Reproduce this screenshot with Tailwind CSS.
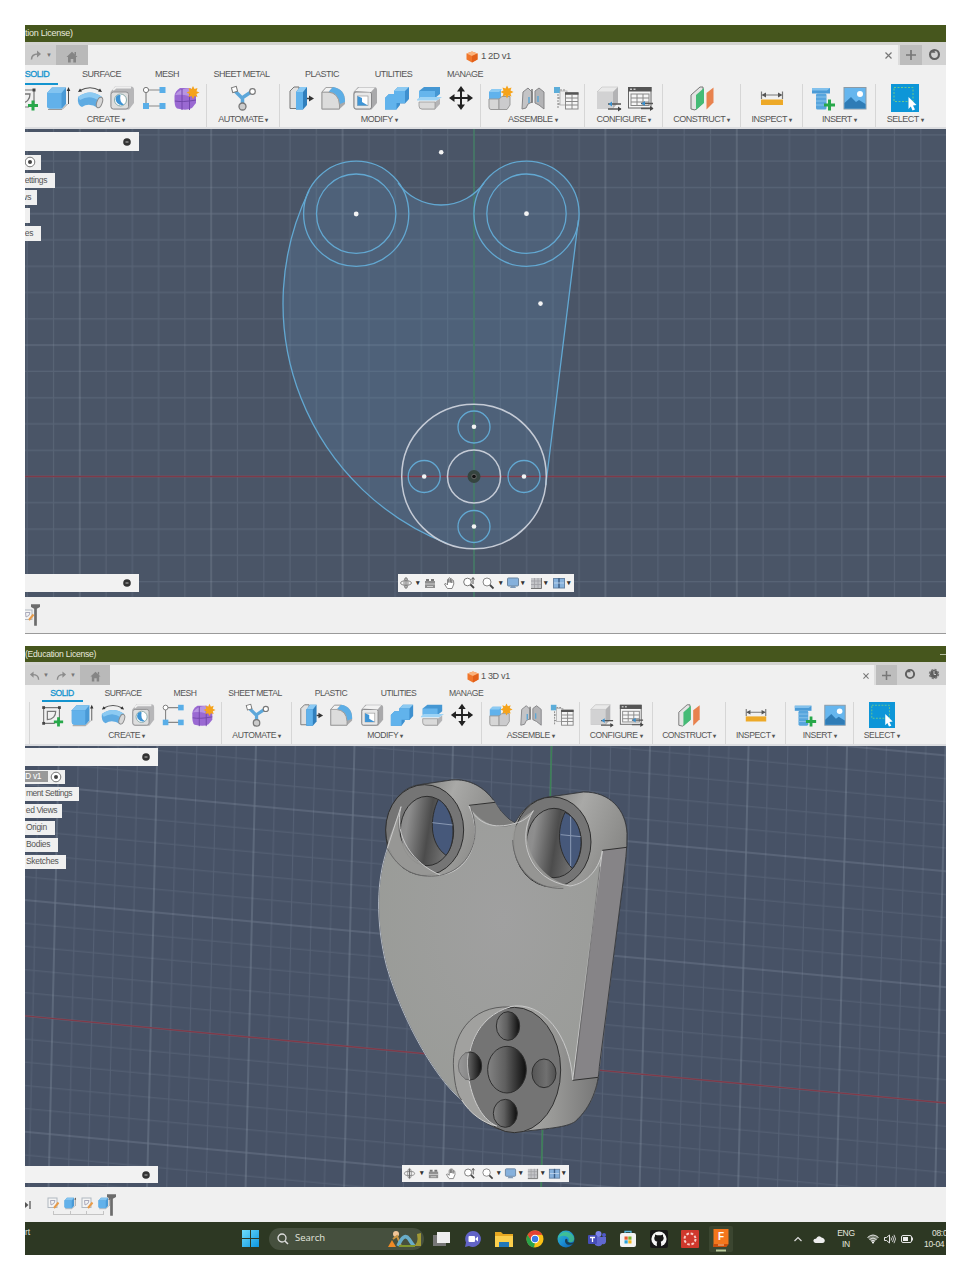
<!DOCTYPE html>
<html lang="en">
<head>
<meta charset="utf-8">
<title>Fusion workspace</title>
<script src="https://cdn.jsdelivr.net/npm/@tailwindcss/browser@4"></script>
</head>
<body class="h-[1280px] w-[970px] overflow-hidden bg-white font-['Liberation_Sans',sans-serif] text-[#555]">

<svg class="absolute h-0 w-0">
  <defs>
    <linearGradient id="gGrey" x1="0" y1="0" x2="1" y2="1"><stop offset="0" stop-color="#f3f3f3"/><stop offset="1" stop-color="#b9b9bb"/></linearGradient>
    <linearGradient id="gHole" x1="0" x2="1"><stop offset="0" stop-color="#838383"/><stop offset=".45" stop-color="#5f5f5f"/><stop offset="1" stop-color="#0d0d0d"/></linearGradient>
    <linearGradient id="gHole2" x1="0" x2="1"><stop offset="0" stop-color="#555"/><stop offset=".6" stop-color="#707070"/><stop offset="1" stop-color="#505050"/></linearGradient>
    <linearGradient id="gBore" x1="0" x2="1" y2=".2"><stop offset="0" stop-color="#8c8c8c"/><stop offset=".2" stop-color="#8e8e8e"/><stop offset=".6" stop-color="#4c4c4c"/><stop offset="1" stop-color="#777"/></linearGradient>
    <linearGradient id="gSide" x1="0" x2="1" y2=".5"><stop offset="0" stop-color="#7d7d7b"/><stop offset=".4" stop-color="#a9a9a7"/><stop offset="1" stop-color="#888886"/></linearGradient>
    <linearGradient id="gLow" x1="0" x2="1"><stop offset="0" stop-color="#b0b0ae"/><stop offset=".5" stop-color="#989896"/><stop offset="1" stop-color="#777"/></linearGradient>
    <radialGradient id="gPlate" cx=".5" cy=".4" r=".6"><stop offset="0" stop-color="#a0a0a0"/><stop offset="1" stop-color="#999b97"/></radialGradient>
    <linearGradient id="gEdge" x1="0" y1="0" x2="1" y2="1"><stop offset="0" stop-color="#35c1b1"/><stop offset=".5" stop-color="#1b8fd8"/><stop offset="1" stop-color="#0c59a4"/></linearGradient>
    <linearGradient id="gWin" x1="0" y1="0" x2="1" y2="1"><stop offset="0" stop-color="#6fdcfb"/><stop offset="1" stop-color="#0b95e0"/></linearGradient>
    <pattern id="grid1" x="474" y="476.5" width="131.4" height="131.4" patternUnits="userSpaceOnUse">
      <path d="M26.3 0V131.4M52.6 0V131.4M78.8 0V131.4M105.1 0V131.4M0 26.3H131.4M0 52.6H131.4M0 78.8H131.4M0 105.1H131.4" stroke="#8795a8" stroke-opacity=".22" stroke-width="1.1"/>
      <path d="M0 0V131.4M131.4 0V131.4M0 0H131.4M0 131.4H131.4" stroke="#9eabba" stroke-opacity=".34" stroke-width="1.2"/>
    </pattern>
    <pattern id="grid2" width="98.3" height="115.6" patternUnits="userSpaceOnUse">
      <path d="M19.66 0V115.6M39.3 0V115.6M59 0V115.6M78.6 0V115.6M0 23.1H98.3M0 46.2H98.3M0 69.4H98.3M0 92.5H98.3" stroke="#8795a8" stroke-opacity=".22" stroke-width="1"/>
      <path d="M0 0V115.6M98.3 0V115.6M0 0H98.3M0 115.6H98.3" stroke="#a9b6c4" stroke-opacity=".36" stroke-width="1.2"/>
    </pattern>
  </defs>

  <symbol id="i-sketch" viewBox="0 0 28 28"><path d="M5 6H22V20M5 6V23H17" fill="none" stroke="#777" stroke-width="1.2"/><path d="M9 10H18C18 15 15 19 9 19Z" fill="none" stroke="#777" stroke-width="1.3"/><g fill="#444"><rect x="3.5" y="4.500" width="3" height="3"/><rect x="20.500" y="4.500" width="3" height="3"/><rect x="3.500" y="21.500" width="3" height="3"/></g><path d="M21 16.500V26.500M16 21.500H26" stroke="#27a84a" stroke-width="3"/></symbol>
  <symbol id="i-extrude" viewBox="0 0 28 28"><path d="M3 9L8 3.500H22V20L18 24.500H6Q3 24.500 3 21Z" fill="#4a9ad6"/><path d="M3 9L8 3.500H22L17.500 9Z" fill="#83c4f0"/><path d="M3 9H17.500V24.500H6Q3 24.500 3 21Z" fill="#62b1ea"/><path d="M4 25.500H18L23.500 20" fill="none" stroke="#999"/><path d="M24.500 6V20" stroke="#555"/><path d="M24.500 3L22.700 7H26.300Z" fill="#333"/></symbol>
  <symbol id="i-sweep" viewBox="0 0 28 28"><path d="M2 13Q14 4 26 13L22 24Q13 18 6 23Q1 21 2 13Z" fill="#5fabe2"/><path d="M2 13Q14 4 26 13L23 17Q14 10 4 16Z" fill="#8ccaf2"/><ellipse cx="23.500" cy="18.500" rx="2.700" ry="5.500" transform="rotate(20 23.500 18.500)" fill="#d8d8d8" stroke="#888"/><path d="M4 6.500Q14 1 24 6.500" fill="none" stroke="#555" stroke-width="1.200"/><path d="M2 8L4 4.500L6 7.500ZM26 8L24 4.500L22 7.500Z" fill="#333"/></symbol>
  <symbol id="i-hole" viewBox="0 0 28 28"><path d="M2.500 8L7 2.500H23Q26 2.500 26 6V19L21 25.500H6Q2.500 25.500 2.500 22Z" fill="#b6b6b8"/><rect x="3" y="8" width="17.500" height="17" rx="2.500" fill="#dedede" stroke="#909092"/><path d="M5 6L8 3.500H23" fill="none" stroke="#efefef" stroke-width="2"/><circle cx="12.500" cy="16" r="6" fill="#fff" stroke="#8aa"/><path d="M8.500 12A6 6 0 0 0 16 20.500Q11 18 12.500 11Q10 10.500 8.500 12" fill="#3f94d4"/></symbol>
  <symbol id="i-pattern" viewBox="0 0 28 28"><path d="M6 6H22M6 6V22H22" fill="none" stroke="#888" stroke-width="1.200"/><circle cx="6" cy="6" r="2.600" fill="#fff" stroke="#777"/><g fill="#59aee8"><rect x="19.500" y="3" width="6" height="6"/><rect x="3" y="19" width="6" height="6"/><rect x="19.500" y="19" width="6" height="6"/></g></symbol>
  <symbol id="i-form" viewBox="0 0 28 28"><path d="M2.500 12Q3 7 8 4H18L24 9V19L20 24Q15 27 5 24.500Q2 23 2.500 12Z" fill="#9a69d2"/><path d="M3 11Q8 4 18 4L23 9Q18 10 17 12Q10 10 3 11Z" fill="#b794e2"/><path d="M3 17Q10 18.500 24 16M10 5V26M17.500 9V26" fill="none" stroke="#7247aa"/><path d="M21 2L22.500 5L25.500 4L24.500 7.200L27.500 8.500L24.500 10L25.500 13L22.500 12L21 15L19.500 12L16.500 13L17.500 10L14.500 8.500L17.500 7.200L16.500 4L19.500 5Z" fill="#f5a31b"/></symbol>
  <symbol id="i-auto" viewBox="0 0 28 28"><path d="M6 7L13 14L22 8M13.500 13V22" stroke="#5ca7da" stroke-width="3.500" fill="none"/><rect x="3" y="3" width="5" height="5" fill="#fff" stroke="#777" transform="rotate(-15 5.500 5.500)"/><circle cx="23.500" cy="7.500" r="2.800" fill="#fff" stroke="#777" stroke-width="1.200"/><circle cx="13.500" cy="22.500" r="3.500" fill="#ccc" stroke="#777" stroke-width="1.300"/></symbol>
  <symbol id="i-press" viewBox="0 0 28 28"><path d="M3 7L7 3H12V24.500H3Z" fill="#e0e0e0" stroke="#777"/><path d="M9 8L13 3H20V21L16 25.500H9Z" fill="#2f7fbd"/><path d="M9 8L13 3H20L16 8Z" fill="#8bcaf4"/><path d="M9 8H16V25.500H9Z" fill="#60b2ec"/><path d="M20 14.500H23" stroke="#444" stroke-width="1.500"/><path d="M22 11.500L27 14.500L22 17.500Z" fill="#333"/></symbol>
  <symbol id="i-fillet" viewBox="0 0 28 28"><path d="M2.500 8L7 3H14Q26 5 26 17V20L20 25.500H2.500Z" fill="#a9a9ab"/><path d="M3 8H9Q20 9 20.500 21V25H3Z" fill="#dcdcdc" stroke="#999"/><path d="M3 8L7 3.500H14L10 8Z" fill="#f2f2f2" stroke="#999" stroke-width=".8"/><path d="M10 7.500L14 3Q26 5 26 18L21 20Q20 9 10 7.500Z" fill="#5caee6"/></symbol>
  <symbol id="i-shell" viewBox="0 0 28 28"><path d="M2.500 8L7 3H23Q26 3 26 6V19L20.500 25.500H5Q2.500 25.500 2.500 22Z" fill="#a9a9ab"/><rect x="3" y="8" width="17.500" height="17" rx="2" fill="#e8e8e8" stroke="#858587"/><path d="M4 7L8 3.500H24L20 8" fill="#f2f2f2"/><rect x="6.500" y="12" width="10.500" height="9.500" fill="#fff" stroke="#999" stroke-width=".7"/><path d="M6.500 12L11 14V18L17 21.500H6.500Z" fill="#3f95d6"/></symbol>
  <symbol id="i-combine" viewBox="0 0 28 28"><path d="M11 7L15 3H26V15L22 19.500H17V21L13.500 25.500H2V14L6 10H11Z" fill="#3e90cf"/><path d="M11 7L15 3H26L22 7Z" fill="#8ccaf2"/><path d="M11 7H22V19H13.500V25.500H2V14L6 10H11Z" fill="#61b3ec"/></symbol>
  <symbol id="i-split" viewBox="0 0 28 28"><path d="M4 7L9 3H25V10L20 14H4Z" fill="#4597d3"/><path d="M4 7H20V13H4Z" fill="#66b5ec"/><path d="M2 15.500L5 13H27L22 16.500H2Z" fill="#9dd3f5"/><path d="M4 18H20L25 14.500V20L20 25.500H7Q4 25 4 22Z" fill="#b4b4b6"/><path d="M4 18H20V25H7Q4 25 4 22Z" fill="#dadada" stroke="#999" stroke-width=".8"/></symbol>
  <symbol id="i-move" viewBox="0 0 28 28"><path d="M14 5V23M5 14H23" stroke="#222" stroke-width="2"/><path d="M14 2L10 7.500H18ZM14 26L10 20.500H18ZM2 14L7.500 10V18ZM26 14L20.500 10V18Z" fill="#222"/></symbol>
  <symbol id="i-newcomp" viewBox="0 0 28 28"><path d="M3 8L6 5H15V15H3Z" fill="#60b2ec"/><path d="M3 8L6 5H16L13 8Z" fill="#8ccaf2"/><path d="M3 15H13V25.500H5Q3 25.500 3 23Z" fill="#d6d6d6" stroke="#999"/><path d="M13 15L16 12.500H24V21L21 25.500H13Z" fill="#cbcbcd" stroke="#999"/><path d="M21 1.500L22.500 4.500L25.500 3.500L24.500 6.500L27.500 8L24.500 9.500L25.500 12.500L22.500 11.500L21 14.500L19.500 11.500L16.500 12.500L17.500 9.500L14.500 8L17.500 6.500L16.500 3.500L19.500 4.500Z" fill="#f5a31b"/></symbol>
  <symbol id="i-joint" viewBox="0 0 28 28"><path d="M4 8L9 4L13 8V18L9 20L7 24L3 25Z" fill="#c4c4c6" stroke="#858587"/><path d="M16 7L20 4L25 8V25L20 21L16 19Z" fill="#b4b4b6" stroke="#858587"/><path d="M13 5V19" stroke="#777" stroke-width="1.500"/><path d="M10 13V19M19 12V18" stroke="#5fa6d4" stroke-width="1.500"/></symbol>
  <symbol id="i-bom" viewBox="0 0 28 28"><rect x="2" y="3" width="6" height="6" fill="#5cadd9"/><path d="M6 10V24M6 14H14M6 20H14M8 6H13" stroke="#888" stroke-dasharray="2 1"/><rect x="8" y="7" width="7" height="14" fill="#eee" stroke="#aaa" stroke-width=".8"/><rect x="13.500" y="9" width="12.500" height="16" fill="#f5f5f5" stroke="#888"/><path d="M13 9.500H26.500" stroke="#555" stroke-width="2.500"/><path d="M14 14H26M14 17.500H26M14 21H26M20 11V25" stroke="#888"/></symbol>
  <symbol id="i-config" viewBox="0 0 28 28"><path d="M3 8L8 3H24V19L19 24.500H3Z" fill="#b3b3b5"/><path d="M3 8L8 3H24L19 8Z" fill="#e9e9e9" stroke="#c2c2c2" stroke-width=".6"/><path d="M3 8H19V24.500H3Z" fill="#d2d2d3"/><path d="M14 20H27M14 25H27" stroke="#555" stroke-width="1.300"/><path d="M18 17.500V22.500L14.500 20Z" fill="#3a90cf"/><path d="M24 22.500V27.500L27.500 25Z" fill="#444"/></symbol>
  <symbol id="i-table" viewBox="0 0 28 28"><rect x="2.500" y="3.500" width="22.500" height="20.500" fill="#f6f6f6" stroke="#666"/><rect x="2" y="3" width="23.500" height="4.500" fill="#555"/><path d="M4 5.200H6M7.500 5.200H9.500" stroke="#fff"/><rect x="5" y="10" width="18" height="11.500" fill="none" stroke="#888"/><path d="M5 14H23M5 18H23M11 10V21M17 10V21" stroke="#888"/><path d="M15 19.500H27M15 24.500H27" stroke="#555" stroke-width="1.300"/><path d="M19 17V22L15.500 19.500Z" fill="#3a90cf"/><path d="M24 22V27L27.500 24.500Z" fill="#444"/></symbol>
  <symbol id="i-construct" viewBox="0 0 28 28"><path d="M3 11L12 3H15V19L7 26L3 25Z" fill="#e4e4e4" stroke="#777"/><path d="M8 11L16 4V19L8 26Z" fill="#45bb76"/><path d="M18.500 9L25.500 3.500V18.500L18.500 25.500Z" fill="#e8824e"/></symbol>
  <symbol id="i-inspect" viewBox="0 0 28 28"><path d="M3.500 7.500V15M24.500 7.500V15M5 11H23" stroke="#777" stroke-width="1.200"/><path d="M3.500 11L8 8.500V13.500ZM24.500 11L20 8.500V13.500Z" fill="#555"/><rect x="3" y="15.500" width="22" height="5.500" fill="#eda928"/></symbol>
  <symbol id="i-bolt" viewBox="0 0 28 28"><path d="M3 4H21V9.500H3Z" fill="#4b9bd6"/><path d="M3 4H21L18 6.500H3Z" fill="#83c1ec"/><rect x="7" y="9.500" width="10.500" height="16" rx="1.500" fill="#57a5dd"/><path d="M7 13H17M7 17H17M7 21H17" stroke="#8ac3eb"/><path d="M20.500 15.500V26.500M15 21H26" stroke="#27a84a" stroke-width="3"/></symbol>
  <symbol id="i-image" viewBox="0 0 28 28"><rect x="3" y="3.500" width="22" height="21.500" fill="#66b6ee" stroke="#8a9aa6"/><path d="M3.500 24.500V19L10 13L15 18L18 16L24.500 20V24.500Z" fill="#2f7cb6"/><circle cx="19" cy="10" r="3" fill="#fff"/></symbol>
  <symbol id="i-select" viewBox="0 0 28 28"><rect width="28" height="28" fill="#0d96d8"/><rect x="3" y="3.500" width="19" height="14" fill="none" stroke="#6bc98d" stroke-dasharray="2 1.500"/><path d="M17.500 13L25.500 21L22 21.500L24 25.500L21.500 26.500L19.800 22.600L17.500 25Z" fill="#fff"/></symbol>
  <symbol id="i-cube" viewBox="0 0 12 12"><path d="M6 .5L11.500 2.500V8.500L6 11.500L.5 8.500V2.500Z" fill="#f0762b"/><path d="M6 .5L11.500 2.500L6 5L.5 2.500Z" fill="#fbb27c"/><path d="M6 5L11.500 2.500V8.500L6 11.500Z" fill="#e2601a"/></symbol>
  <symbol id="i-home" viewBox="0 0 12 12"><path d="M6 .8L11.500 6H10V11.500H7.300V8H4.700V11.500H2V6H.5Z" fill="#858585"/><path d="M8.500 1H10V4H8.500Z" fill="#858585"/></symbol>
  <symbol id="i-redo" viewBox="0 0 12 12"><path d="M1.500 10.500Q1.500 5 8 5" fill="none" stroke="#8c8c8c" stroke-width="1.500"/><path d="M7 1.500L11 5L7 8.500Z" fill="#8c8c8c"/></symbol>
  <symbol id="i-ring" viewBox="0 0 14 14"><circle cx="7" cy="7" r="4.800" fill="none" stroke="#606060" stroke-width="2.300"/><path d="M3.500 5L6 1.500L8 5Z" fill="#606060"/></symbol>
  <symbol id="i-dot" viewBox="0 0 8 8"><circle cx="4" cy="4" r="3.800" fill="#333"/><path d="M2.500 4H5.500" stroke="#bbb"/></symbol>
  <symbol id="i-eye" viewBox="0 0 12 12"><circle cx="6" cy="6" r="4.800" fill="#fff" stroke="#777"/><circle cx="6" cy="6" r="2" fill="#444"/></symbol>

  <symbol id="n-orbit" viewBox="0 0 14 14"><ellipse cx="7" cy="7" rx="5.500" ry="2.300" fill="none" stroke="#888"/><ellipse cx="7" cy="7" rx="2" ry="5.500" fill="none" stroke="#888"/><path d="M7 2V12" stroke="#666"/></symbol>
  <symbol id="n-look" viewBox="0 0 14 14"><path d="M2 5H12V12H2Z" fill="#8e8e8e"/><path d="M3 3H6V5H3ZM8 3H11V5H8Z" fill="#777"/><path d="M2 8H12M4 10.500H10" stroke="#ddd" stroke-width=".8"/></symbol>
  <symbol id="n-pan" viewBox="0 0 14 14"><path d="M4 12L1.500 8L3 7.500L4.500 9V3.500Q5.200 2.500 5.800 3.500V6.500V2.200Q6.500 1.200 7.300 2.200V6.500V2.800Q8.200 2 8.800 3V7V4.200Q9.800 3.500 10.500 4.500L10.800 8L9 12.500H4.500Z" fill="#fff" stroke="#777" stroke-width=".9"/></symbol>
  <symbol id="n-zoom" viewBox="0 0 14 14"><circle cx="5.500" cy="6" r="3.800" fill="#fff" stroke="#777"/><path d="M8.500 8.500L12 12" stroke="#444" stroke-width="1.800"/><path d="M11 2V8M9.500 3.500L11 1.500L12.500 3.500" stroke="#555" fill="none"/></symbol>
  <symbol id="n-fit" viewBox="0 0 14 14"><circle cx="6" cy="6" r="4" fill="#fff" stroke="#888"/><path d="M9 9L12.500 12.500" stroke="#444" stroke-width="1.800"/></symbol>
  <symbol id="n-display" viewBox="0 0 14 14"><rect x="1.500" y="2" width="11" height="8" rx="1" fill="#86b1dc" stroke="#6d86a0"/><path d="M4 12H10L9 10H5Z" fill="#7e9ab8"/></symbol>
  <symbol id="n-grid" viewBox="0 0 14 14"><rect x="2" y="2" width="10.500" height="10.500" fill="#c4c5c8"/><path d="M2 5H12M2 8.500H12M5.500 2V12M9 2V12" stroke="#a0a0a4" stroke-width=".8" fill="none"/><path d="M2 12.500H12.500V2" stroke="#777" fill="none"/></symbol>
  <symbol id="n-view" viewBox="0 0 14 14"><rect x="1.500" y="2.500" width="11" height="9.500" fill="#86b1dc" stroke="#6784a4"/><path d="M7 2V12" stroke="#3e5f86" stroke-width="1.500"/><path d="M2 7H12" stroke="#c9dcf0" stroke-width=".8"/></symbol>
  <symbol id="t-skt" viewBox="0 0 14 14"><rect x="2" y="2" width="9" height="9.500" fill="#f4f4f4" stroke="#b0b8c0"/><path d="M4.500 4.500H9Q9 8 5 9Z" fill="none" stroke="#aab"/><path d="M12.500 6.500L8 12" stroke="#e89b48" stroke-width="2"/></symbol>
  <symbol id="t-mark" viewBox="0 0 10 24"><path d="M0 0H10V3L6.500 5V24H3.500V5L0 3Z" fill="#6c6c6c"/></symbol>
</svg>

<!-- 2D sketch window -->
<section class="mt-[25px] ml-[25px] flex h-[608.500px] w-[921px] flex-col overflow-hidden border-b border-[#9a9a9a] bg-[#f0f0f0]">
  <header class="flex h-[17px] shrink-0 items-center bg-[#46561d] text-[9px] tracking-[-0.25px] text-[#e8e9dd]"><span class="whitespace-nowrap">tion License)</span></header>
  <div class="flex h-[23px] shrink-0 border-t-3 border-[#d3d3d1]">
    <div class="flex w-[31px] items-center gap-1 bg-[#cfcfcf] pl-[5px]"><svg class="size-[12px]"><use href="#i-redo"/></svg><span class="text-[6px] text-[#777]">▼</span></div>
    <div class="flex w-[32px] items-center justify-center bg-[#b9b9b9]"><svg class="mt-[3px] size-[12px]"><use href="#i-home"/></svg></div>
    <div class="flex flex-1 items-center"><svg class="ml-[378px] mt-[3px] size-[12px]"><use href="#i-cube"/></svg><span class="mt-[2px] ml-[3px] w-[40px] whitespace-nowrap text-[9.500px] tracking-[-0.4px]">1 2D v1</span></div>
    <div class="flex w-[13px] items-center"><svg class="size-[7px]" viewBox="0 0 7 7"><path d="M.5.500L6.500 6.500M6.500.500L.500 6.500" stroke="#777" stroke-width="1.200"/></svg></div>
    <div class="flex w-[24px] items-center justify-center border-l-2 border-[#ddd] bg-[#bdbdbd]"><svg class="size-[10px]" viewBox="0 0 10 10"><path d="M5 0V10M0 5H10" stroke="#777" stroke-width="1.700"/></svg></div>
    <div class="flex w-[24px] items-center justify-center bg-[#d2d2d2]"><svg class="mb-[2px] size-[13px]"><use href="#i-ring"/></svg></div>
  </div>
  <nav class="-ml-[20px] flex h-[18px] shrink-0 items-center text-center text-[9px] tracking-[-0.5px]">
    <span class="relative top-px w-[64px] text-[#1494cf] [-webkit-text-stroke:0.3px]">SOLID<i class="absolute -bottom-[3px] left-0 h-[2px] w-[53px] bg-[#1494cf]"></i></span><span class="mt-[2px] w-[65px]">SURFACE</span><span class="mt-[2px] w-[66px]">MESH</span><span class="mt-[2px] w-[83px]">SHEET METAL</span><span class="mt-[2px] w-[78px]">PLASTIC</span><span class="mt-[2px] w-[65px]">UTILITIES</span><span class="mt-[2px] w-[78px]">MANAGE</span>
  </nav>
  <div class="flex h-[46px] shrink-0 border-b-2 border-[#dcdde0] pt-[1px] text-[9px] tracking-[-0.5px] [&_svg]:size-[28px] [&_svg]:shrink-0">
    <div class="w-[182px] border-r border-[#d6d6d6]"><div class="-ml-[13px] flex gap-1"><svg><use href="#i-sketch"/></svg><svg><use href="#i-extrude"/></svg><svg><use href="#i-sweep"/></svg><svg><use href="#i-hole"/></svg><svg><use href="#i-pattern"/></svg><svg><use href="#i-form"/></svg></div><p class="w-[161px] text-center leading-[14px]">CREATE <b class="text-[6px]">▾</b></p></div>
    <div class="flex w-[73px] flex-col items-center border-r border-[#d6d6d6]"><svg><use href="#i-auto"/></svg><p class="leading-[14px]">AUTOMATE <b class="text-[6px]">▾</b></p></div>
    <div class="w-[201px] border-r border-[#d6d6d6]"><div class="ml-[7px] flex gap-1"><svg><use href="#i-press"/></svg><svg><use href="#i-fillet"/></svg><svg><use href="#i-shell"/></svg><svg><use href="#i-combine"/></svg><svg><use href="#i-split"/></svg><svg><use href="#i-move"/></svg></div><p class="w-[198px] text-center leading-[14px]">MODIFY <b class="text-[6px]">▾</b></p></div>
    <div class="flex w-[104px] flex-col items-center border-r border-[#d6d6d6]"><div class="flex gap-[5px]"><svg><use href="#i-newcomp"/></svg><svg><use href="#i-joint"/></svg><svg><use href="#i-bom"/></svg></div><p class="leading-[14px]">ASSEMBLE <b class="text-[6px]">▾</b></p></div>
    <div class="flex w-[78px] flex-col items-center border-r border-[#d6d6d6]"><div class="flex gap-[4px]"><svg><use href="#i-config"/></svg><svg><use href="#i-table"/></svg></div><p class="leading-[14px]">CONFIGURE <b class="text-[6px]">▾</b></p></div>
    <div class="flex w-[78px] flex-col items-center border-r border-[#d6d6d6]"><svg><use href="#i-construct"/></svg><p class="leading-[14px]">CONSTRUCT <b class="text-[6px]">▾</b></p></div>
    <div class="flex w-[62px] flex-col items-center border-r border-[#d6d6d6]"><svg><use href="#i-inspect"/></svg><p class="leading-[14px]">INSPECT <b class="text-[6px]">▾</b></p></div>
    <div class="flex w-[73px] flex-col items-center border-r border-[#d6d6d6]"><div class="flex gap-[4px]"><svg><use href="#i-bolt"/></svg><svg><use href="#i-image"/></svg></div><p class="leading-[14px]">INSERT <b class="text-[6px]">▾</b></p></div>
    <div class="flex w-[58px] flex-col items-center"><svg><use href="#i-select"/></svg><p class="leading-[14px]">SELECT <b class="text-[6px]">▾</b></p></div>
  </div>

  <main class="relative h-[468px] shrink-0 bg-[#4a5567]">
    <svg class="block h-[468px] w-[921px]" viewBox="25 129 921 468" fill="none">
      <rect x="25" y="129" width="921" height="468" fill="url(#grid1)"/>
      <path d="M309 190.800A257.500 257.500 0 0 0 448 543.800A72.300 72.300 0 0 0 545.800 485L578.400 220A52.500 52.500 0 0 0 484 183A53 53 0 0 1 398.100 183.100A52.500 52.500 0 0 0 309 190.800Z" fill="#5a87b0" fill-opacity=".25"/>
      <path d="M25 476.500H946" stroke="#803a49" stroke-width="1.300"/>
      <path d="M474 129V597" stroke="#3b7a5e" stroke-width="1.300"/>
      <g stroke="#62a8d2" stroke-width="1.300">
        <path d="M309 190.800A257.500 257.500 0 0 0 448 543.800M545.800 485L578.400 220M484 183A53 53 0 0 1 398.100 183.100"/>
        <circle cx="356.200" cy="213.700" r="52.600"/><circle cx="356.200" cy="213.700" r="39.700"/>
        <circle cx="526.500" cy="213.700" r="52.600"/><circle cx="526.500" cy="213.700" r="39.700"/>
        <circle cx="474" cy="427" r="16"/><circle cx="424.200" cy="476.500" r="16"/><circle cx="524" cy="476.500" r="16"/><circle cx="474" cy="526.500" r="16"/>
      </g>
      <g stroke="#c5cbd6" stroke-width="1.500"><circle cx="474" cy="476.500" r="72.300"/><circle cx="474" cy="476.500" r="26.500"/></g>
      <circle cx="474" cy="476.500" r="6.500" fill="#35443f"/><circle cx="474" cy="476.500" r="2.300" fill="#111" stroke="#666"/>
      <g fill="#f4f4f4"><circle cx="356.200" cy="214" r="2.400"/><circle cx="526.500" cy="213.700" r="2.400"/><circle cx="441.200" cy="152.300" r="2.300"/><circle cx="540.500" cy="303.600" r="2.300"/><circle cx="474" cy="426.700" r="2.300"/><circle cx="424.200" cy="476.500" r="2.300"/><circle cx="524" cy="476.500" r="2.300"/><circle cx="474" cy="526.500" r="2.300"/></g>
    </svg>
    <div class="absolute top-[3px] left-0 flex flex-col items-start gap-[2.750px] text-[9px] tracking-[-0.4px]">
      <div class="mb-[1px] flex h-[19px] w-[114px] items-center justify-end bg-[#f2f2f2] pr-2"><svg class="size-[8px]"><use href="#i-dot"/></svg></div>
      <div class="flex h-[15px] w-[16px] items-center bg-[#f0f0f0]"><svg class="-ml-px size-[12px]"><use href="#i-eye"/></svg></div>
      <div class="flex h-[15px] w-[30px] items-center justify-end bg-[#f0f0f0] pr-[8px] text-[8.500px]">ettings</div>
      <div class="flex h-[15px] w-[12px] items-center justify-end overflow-hidden bg-[#f0f0f0] pr-[6px]">ws</div>
      <div class="h-[15px] w-[5px] bg-[#f0f0f0]"></div>
      <div class="flex h-[15px] w-[16px] items-center justify-end bg-[#f0f0f0] pr-[8px] text-[8.500px]">es</div>
    </div>
    <div class="absolute bottom-[5px] left-0 flex h-[18px] w-[114px] items-center justify-end bg-[#f2f2f2] pr-2"><svg class="size-[8px]"><use href="#i-dot"/></svg></div>
    <div class="absolute bottom-[5px] left-[373px] flex h-[18px] w-[176px] items-center bg-[#f2f2f2] pl-[1px] text-[7px] text-[#333] [&_svg]:size-[14px]">
      <svg><use href="#n-orbit"/></svg><b class="w-[10px] text-center">▾</b><svg><use href="#n-look"/></svg><svg class="ml-[6px]"><use href="#n-pan"/></svg><svg class="ml-[5px]"><use href="#n-zoom"/></svg><svg class="ml-[5px]"><use href="#n-fit"/></svg><b class="w-[11px] text-center">▾</b><svg><use href="#n-display"/></svg><b class="w-[9px] pl-px">▾</b><svg><use href="#n-grid"/></svg><b class="w-[9px] pl-px">▾</b><svg><use href="#n-view"/></svg><b class="pl-px">▾</b>
    </div>
  </main>
  <footer class="flex flex-1 items-start pt-[6px]"><svg class="-ml-[4px] mt-[5px] size-[14px]"><use href="#t-skt"/></svg><svg class="-ml-[4px] h-[24px] w-[9px]"><use href="#t-mark"/></svg></footer>
</section>

<!-- 3D model window -->
<section class="mt-[12.500px] ml-[25px] flex h-[609px] w-[921px] flex-col overflow-hidden bg-[#f0f0f0]">
  <header class="flex h-[16px] shrink-0 items-center justify-between bg-[#46561d] text-[8.600px] tracking-[-0.25px] text-[#e8e9dd]"><span class="whitespace-nowrap">(Education License)</span><i class="h-px w-[6px] bg-[#b5bda0]"></i></header>
  <div class="flex h-[23px] shrink-0 border-t-3 border-[#d3d3d1]">
    <div class="flex w-[55px] items-center bg-[#cfcfcf] pl-[4px]"><svg class="size-[11px] -scale-x-100"><use href="#i-redo"/></svg><span class="ml-[3px] text-[6px] text-[#777]">▼</span><svg class="ml-[7px] size-[11px]"><use href="#i-redo"/></svg><span class="ml-[3px] text-[6px] text-[#777]">▼</span></div>
    <div class="flex w-[30px] items-center justify-center bg-[#b9b9b9]"><svg class="mt-[3px] size-[11px]"><use href="#i-home"/></svg></div>
    <div class="flex flex-1 items-center"><svg class="ml-[357px] mt-[3px] size-[12px]"><use href="#i-cube"/></svg><span class="mt-[3px] ml-[2px] w-[40px] whitespace-nowrap text-[9px] tracking-[-0.300px]">1 3D v1</span></div>
    <div class="flex w-[11px] items-center"><svg class="mt-[1px] size-[6px]" viewBox="0 0 7 7"><path d="M.5.500L6.500 6.500M6.500.500L.500 6.500" stroke="#777" stroke-width="1.200"/></svg></div>
    <div class="flex w-[23px] items-center justify-center border-l-2 border-[#ddd] bg-[#bdbdbd]"><svg class="size-[9px]" viewBox="0 0 10 10"><path d="M5 0V10M0 5H10" stroke="#777" stroke-width="1.700"/></svg></div>
    <div class="flex w-[49px] items-center gap-[12px] bg-[#d2d2d2] pl-[7px]"><svg class="mb-[2px] size-[12px]"><use href="#i-ring"/></svg><svg class="mb-[2px] size-[12px]" viewBox="0 0 12 12"><circle cx="6" cy="6" r="4.200" fill="#5f5f5f" stroke="#777" stroke-width="2" stroke-dasharray="2 1.300"/><path d="M6 3V6.500H8" stroke="#ccc" fill="none"/></svg></div>
  </div>
  <nav class="ml-[7px] flex h-[16px] shrink-0 items-center text-center text-[8.600px] tracking-[-0.500px]">
    <span class="relative w-[60px] text-[#1494cf] [-webkit-text-stroke:0.300px]">SOLID<i class="absolute -bottom-[3px] left-[10px] h-[2px] w-[41px] bg-[#1494cf]"></i></span><span class="w-[62px]">SURFACE</span><span class="w-[62px]">MESH</span><span class="w-[78px]">SHEET METAL</span><span class="w-[74px]">PLASTIC</span><span class="w-[61px]">UTILITIES</span><span class="w-[74px]">MANAGE</span>
  </nav>
  <div class="flex h-[45px] shrink-0 border-b-2 border-[#dcdde0] pt-[1px] text-[8.600px] tracking-[-0.400px] [&_svg]:size-[26px] [&_svg]:shrink-0">
    <div class="w-[5px] border-r border-[#d6d6d6]"></div>
    <div class="w-[192px] border-r border-[#d6d6d6]"><div class="ml-[9px] flex gap-[4.300px]"><svg><use href="#i-sketch"/></svg><svg><use href="#i-extrude"/></svg><svg><use href="#i-sweep"/></svg><svg><use href="#i-hole"/></svg><svg><use href="#i-pattern"/></svg><svg><use href="#i-form"/></svg></div><p class="w-[193px] text-center leading-[15px]">CREATE <b class="text-[6px]">▾</b></p></div>
    <div class="flex w-[70px] flex-col items-center border-r border-[#d6d6d6]"><svg><use href="#i-auto"/></svg><p class="leading-[15px]">AUTOMATE <b class="text-[6px]">▾</b></p></div>
    <div class="w-[190px] border-r border-[#d6d6d6]"><div class="ml-[6px] flex gap-[4.300px]"><svg><use href="#i-press"/></svg><svg><use href="#i-fillet"/></svg><svg><use href="#i-shell"/></svg><svg><use href="#i-combine"/></svg><svg><use href="#i-split"/></svg><svg><use href="#i-move"/></svg></div><p class="w-[186px] text-center leading-[15px]">MODIFY <b class="text-[6px]">▾</b></p></div>
    <div class="flex w-[98px] flex-col items-center border-r border-[#d6d6d6]"><div class="flex gap-[5px]"><svg><use href="#i-newcomp"/></svg><svg><use href="#i-joint"/></svg><svg><use href="#i-bom"/></svg></div><p class="leading-[15px]">ASSEMBLE <b class="text-[6px]">▾</b></p></div>
    <div class="flex w-[73px] flex-col items-center border-r border-[#d6d6d6]"><div class="flex gap-[4px]"><svg><use href="#i-config"/></svg><svg><use href="#i-table"/></svg></div><p class="leading-[15px]">CONFIGURE <b class="text-[6px]">▾</b></p></div>
    <div class="flex w-[73px] flex-col items-center border-r border-[#d6d6d6] tracking-[-0.500px]"><svg><use href="#i-construct"/></svg><p class="leading-[15px]">CONSTRUCT <b class="text-[6px]">▾</b></p></div>
    <div class="flex w-[60px] flex-col items-center border-r border-[#d6d6d6]"><svg><use href="#i-inspect"/></svg><p class="leading-[15px]">INSPECT <b class="text-[6px]">▾</b></p></div>
    <div class="flex w-[68px] flex-col items-center border-r border-[#d6d6d6]"><div class="flex gap-[4px]"><svg><use href="#i-bolt"/></svg><svg><use href="#i-image"/></svg></div><p class="leading-[15px]">INSERT <b class="text-[6px]">▾</b></p></div>
    <div class="flex w-[55px] flex-col items-center"><svg><use href="#i-select"/></svg><p class="leading-[15px]">SELECT <b class="text-[6px]">▾</b></p></div>
  </div>

  <main class="relative h-[441px] shrink-0 bg-[#475266]">
    <svg class="block h-[441px] w-[921px]" viewBox="25 746 921 441" fill="none">
      <g transform="matrix(1 .0946 -.0235 1 544 1065)">
        <rect x="-700" y="-600" width="1300" height="900" fill="url(#grid2)"/>
        <path d="M-600 0H500" stroke="#803a49" stroke-width="1.400"/><path d="M0 -500V200" stroke="#3b8055" stroke-width="1.500"/>
      </g>
      <g transform="translate(370 770) scale(.33333)" stroke-width="3" stroke-linejoin="round">
        <path d="M47 190C50 110 90 50 150 44L245 30C300 25 345 55 370 90C390 125 415 150 435 158C455 125 480 90 530 82L640 66C720 65 768 120 771 190C772 240 765 280 760 330L688 890C685 950 665 1010 615 1055C590 1070 560 1073 470 1083C390 1095 330 1060 275 990C200 930 100 760 50 590C15 450 20 330 52 235Z" fill="url(#gPlate)" stroke="#3a3d42"/>
        <path d="M52 235C20 330 15 450 50 590C100 760 200 930 275 990" stroke="#b5bcc8"/>
        <path d="M150 44L245 30C300 25 345 55 375 97L297 108C328 160 325 230 285 270C262 300 235 316 210 315Z" fill="url(#gSide)"/>
        <path d="M297 108L375 97C392 128 415 152 435 160C410 180 340 175 297 108Z" fill="#7c7c7b"/>
        <path d="M530 82L640 66C720 65 768 120 771 190V232L697 241C690 290 650 345 595 350Z" fill="url(#gSide)"/>
        <path d="M697 241L770 232C768 280 765 300 760 330L686 923L608 930Z" fill="#868487"/>
        <path d="M420 710C520 695 600 800 608 930L684 921C682 960 665 1010 615 1055C590 1070 560 1073 470 1083Z" fill="url(#gLow)"/>
        <path d="M150 44L245 30C300 25 345 55 370 90M530 82L640 66C720 65 768 120 771 190C772 240 765 280 760 330L688 890C685 950 665 1010 615 1055C590 1070 560 1073 470 1083" stroke="#3a3d42"/>
        <g stroke="#2d2d2d">
          <ellipse cx="164" cy="180" rx="117" ry="136" fill="#757575"/>
          <ellipse cx="171" cy="183" rx="80" ry="104" fill="url(#gBore)"/>
          <ellipse cx="547" cy="216" rx="116" ry="135" fill="#757575"/>
          <ellipse cx="552" cy="219" rx="82" ry="104" fill="url(#gBore)"/>
        </g>
        <path d="M205 88C178 145 178 220 228 256C260 220 258 120 205 88Z" fill="#46587a" stroke="#2d2d2d"/>
        <path d="M585 127C560 180 560 245 607 296C645 250 645 155 585 127Z" fill="#46587a" stroke="#2d2d2d"/>
        <path d="M187 158L248 165M572 194L632 200M602 140V288" stroke="#8a99b3"/>
        <path d="M93 110C65 190 55 200 52 235C90 310 150 325 210 315C130 270 60 220 93 110Z" fill="#9b9b99" fill-opacity=".9"/>
        <path d="M490 122C440 150 425 180 428 210C430 290 490 360 580 355L600 348C500 320 440 220 490 122Z" fill="#9b9b99" fill-opacity=".85"/>
        <path d="M52 235C85 300 140 328 210 316M428 210C430 290 490 360 580 355" stroke="#6b6b6b"/>
        <path d="M52 235L93 110C70 200 130 280 210 315C290 310 345 210 297 108C320 160 370 180 435 160C455 155 475 145 490 122C440 200 470 330 600 348C655 340 690 290 697 243L608 930C600 800 520 690 420 710" stroke="#c9c9c9"/>
        <path d="M303 115C340 215 290 300 210 316" stroke="#6a6a6a"/>
        <path d="M297 106L375 97M697 241L770 232M608 931L684 922" stroke="#2f2f2f"/>
        <path d="M690 290L612 925" stroke="#555" stroke-width="2"/>
        <ellipse cx="433" cy="900" rx="139" ry="188" fill="#747474" stroke="#303030"/>
        <path d="M420 711C300 705 242 800 251 900C255 950 262 975 275 990C300 1030 340 1060 380 1068C340 1050 310 1000 297 930C285 840 320 740 420 711Z" fill="#a1a19f"/>
        <path d="M420 711C300 705 242 800 251 900C255 950 262 975 275 990" stroke="#5c5c5c"/>
        <path d="M420 711C320 740 285 840 297 930C310 1000 340 1050 380 1068C340 1060 300 1030 275 990" stroke="#cfcfcf"/>
        <g stroke="#2e2e2e" fill="url(#gHole)"><ellipse cx="414" cy="768" rx="35" ry="43"/><ellipse cx="300" cy="888" rx="35" ry="42"/><ellipse cx="522" cy="910" rx="36" ry="43" fill="url(#gHole2)"/><ellipse cx="406" cy="1030" rx="36" ry="42"/><ellipse cx="411" cy="899" rx="58" ry="70"/></g>
        <path d="M296 846A35 42 0 0 0 298 930Q290 890 296 846Z" fill="#aaa" fill-opacity=".55"/>
        <path d="M295 850Q288 885 299 930" stroke="#bbb"/>
      </g>
    </svg>
    <div class="absolute top-[2px] left-0 flex flex-col items-start gap-[2.500px] text-[8.500px] tracking-[-0.300px]">
      <div class="mb-px flex h-[18px] w-[133px] items-center justify-end bg-[#f2f2f2] pr-2"><svg class="size-[8px]"><use href="#i-dot"/></svg></div>
      <div class="flex h-[14.500px] w-[40px] items-center bg-[#f0f0f0]"><span class="flex h-[11px] w-[23px] items-center overflow-hidden bg-[#999] text-white">D v1</span><svg class="ml-[2px] size-[12px]"><use href="#i-eye"/></svg></div>
      <div class="flex h-[14.500px] w-[54px] items-center justify-end bg-[#f0f0f0] pr-[7px] tracking-[-0.450px] whitespace-nowrap">ment Settings</div>
      <div class="flex h-[14.500px] w-[37px] items-center justify-end bg-[#f0f0f0] pr-[5px] tracking-[-0.400px] whitespace-nowrap">ed Views</div>
      <div class="flex h-[14.500px] w-[30px] items-center bg-[#f0f0f0] pl-px">Origin</div>
      <div class="flex h-[14.500px] w-[33px] items-center bg-[#f0f0f0] pl-px">Bodies</div>
      <div class="flex h-[14.500px] w-[41px] items-center bg-[#f0f0f0] pl-px">Sketches</div>
    </div>
    <div class="absolute bottom-[4px] left-0 flex h-[17px] w-[133px] items-center justify-end bg-[#f2f2f2] pr-2"><svg class="size-[8px]"><use href="#i-dot"/></svg></div>
    <div class="absolute bottom-[5px] left-[377px] flex h-[17px] w-[167px] items-center bg-[#f2f2f2] pl-[1px] text-[7px] text-[#333] [&_svg]:size-[13px]">
      <svg><use href="#n-orbit"/></svg><b class="w-[11px] text-center">▾</b><svg><use href="#n-look"/></svg><svg class="ml-[5px]"><use href="#n-pan"/></svg><svg class="ml-[5px]"><use href="#n-zoom"/></svg><svg class="ml-[5px]"><use href="#n-fit"/></svg><b class="w-[10px] text-center">▾</b><svg><use href="#n-display"/></svg><b class="w-[9px] pl-[2px]">▾</b><svg><use href="#n-grid"/></svg><b class="w-[9px] pl-[2px]">▾</b><svg><use href="#n-view"/></svg><b class="pl-px">▾</b>
    </div>
  </main>

  <footer class="flex h-[35px] shrink-0 items-start pt-[7px]">
    <svg class="mt-[7px] h-[8px] w-[6px]" viewBox="0 0 6 8"><path d="M0 1L3.500 4L0 7Z" fill="#555"/><path d="M5 0V8" stroke="#555" stroke-width="1.300"/></svg>
    <div class="mt-[2px] ml-[15px] w-[68px]"><div class="flex gap-[3px] [&_svg]:size-[14px]"><svg><use href="#t-skt"/></svg><svg viewBox="0 0 28 28"><use href="#i-extrude"/></svg><svg><use href="#t-skt"/></svg><svg viewBox="0 0 28 28"><use href="#i-extrude"/></svg></div>
      <div class="mt-px ml-[7px] flex h-[4px] w-[51px] border-x border-b border-[#c4c4c4]"><i class="w-1/3"></i><i class="w-1/3 border-x border-[#c4c4c4]"></i></div></div>
    <svg class="-ml-[7px] h-[22px] w-[9px]"><use href="#t-mark"/></svg>
  </footer>

  <div class="flex h-[33px] shrink-0 items-center bg-[#2d3823] text-[#e3e6df] [&>*]:shrink-0">
    <span class="mb-[12px] w-[217px] text-[8.500px]">rt</span>
    <svg class="size-[17px]" viewBox="0 0 17 17" fill="url(#gWin)"><path d="M0 0H8V8H0ZM9 0H17V8H9ZM0 9H8V17H0ZM9 9H17V17H9Z"/></svg>
    <div class="ml-[10px] flex h-[22px] w-[155px] items-center rounded-full bg-[#46503e] pl-[8px] font-['Open_Sans',sans-serif] text-[9.500px]">
      <svg class="size-[12px]" viewBox="0 0 12 12"><circle cx="5" cy="5" r="4" fill="none" stroke="#ddd" stroke-width="1.300"/><path d="M8 8L11 11" stroke="#ddd" stroke-width="1.500"/></svg>
      <span class="ml-[6px]">Search</span>
      <svg class="ml-auto h-[18px] w-[38px]" viewBox="0 0 38 18"><path d="M2 17L6 10L10 17Z" fill="#ee8a26"/><circle cx="10" cy="4" r="3" fill="#f0c698"/><path d="M7 9L11 6L15 16" stroke="#c89440" stroke-width="2" fill="none"/><path d="M12 16Q18 2 23 9Q26 14 28 16" stroke="#69adc9" stroke-width="3.500" fill="none"/><path d="M27 16Q33 14 31 4L35 3V16Z" fill="#a29a35"/><path d="M13 16H29" stroke="#80952e" stroke-width="2"/></svg>
    </div>
    <div class="ml-[8px] flex gap-[11px] [&_svg]:size-[20px]">
      <svg viewBox="0 0 20 20"><rect x="1" y="6" width="13" height="11" fill="#777"/><rect x="5" y="3" width="13" height="11" fill="#eee"/></svg>
      <svg viewBox="0 0 20 20"><path d="M10 2A8 8 0 1 1 6 17L2 18L3 13.500A8 8 0 0 1 10 2Z" fill="#6264c7"/><rect x="5.500" y="7" width="6.500" height="6" rx="1" fill="#fff"/><path d="M12.500 9.500L15 7.500V12.500L12.500 10.500Z" fill="#fff"/></svg>
      <svg viewBox="0 0 20 20"><path d="M1 3H7L9 5H19V18H1Z" fill="#e6a821"/><path d="M1 7H19V18H1Z" fill="#fbcf4c"/><path d="M5 13H15V18H5Z" fill="#2277b8"/></svg>
      <svg viewBox="0 0 20 20"><circle cx="10" cy="10" r="8.500" fill="#fbc116"/><path d="M2.600 5.800A8.500 8.500 0 0 1 17.400 5.800L10 6Z" fill="#e34133"/><path d="M2.600 5.800L7 12L10 13.500L9 18.500A8.500 8.500 0 0 1 2.600 5.800Z" fill="#2aa34b"/><path d="M2.600 5.800L6.500 12Q5.500 7 10 6Z" fill="#e34133"/><circle cx="10" cy="10" r="4.200" fill="#fff"/><circle cx="10" cy="10" r="3.200" fill="#3a79e6"/></svg>
      <svg viewBox="0 0 20 20"><circle cx="10" cy="10" r="8.500" fill="url(#gEdge)"/><path d="M3 7Q8 1 14 4Q19 7 18 11Q17 14 12.500 13Q14 8 9 7Q5 6 2 9Z" fill="#4fd07a" fill-opacity=".65"/><path d="M18.500 13Q14 15 11.500 12.500Q12 9 9.500 10Q8 13 11 15.500Q15 16.500 17.500 14.500Z" fill="#173f56"/></svg>
      <svg viewBox="0 0 20 20"><circle cx="11.500" cy="5" r="3" fill="#7b83eb"/><circle cx="17" cy="6" r="2" fill="#5059c9"/><path d="M7 8H19V13Q18 16 15.500 15Q13 19 8 16Z" fill="#6068cf"/><rect x="1" y="6" width="9" height="9" rx="1" fill="#464eb8"/><path d="M3 8.500H8M5.500 8.500V13" stroke="#fff" stroke-width="1.300"/></svg>
      <svg viewBox="0 0 20 20"><path d="M7 5V2.500H13V5" fill="none" stroke="#59b7dd" stroke-width="1.300"/><rect x="2" y="4" width="16" height="14" rx="2" fill="#f3f3f3"/><path d="M6.500 7.500H9.700V10.700H6.500Z" fill="#e55b2b"/><path d="M10.300 7.500H13.500V10.700H10.300Z" fill="#7bb52c"/><path d="M6.500 11.300H9.700V14.500H6.500Z" fill="#29a3dc"/><path d="M10.300 11.300H13.500V14.500H10.300Z" fill="#f5b61c"/></svg>
      <svg viewBox="0 0 20 20"><rect x="1" y="1" width="18" height="18" rx="2" fill="#171717"/><circle cx="10" cy="10" r="7.600" fill="#f6f6f6"/><path d="M7.800 18V14Q8 13 8.400 12.700Q5 12 5.300 9Q5.400 8 6 7.200L6 5.500L8 6.300H12L14 5.500V7.200Q15 8.500 14.600 10Q14 12.300 11.700 12.700Q12.200 13.200 12.200 18Z" fill="#171717"/></svg>
      <svg viewBox="0 0 20 20"><rect x="1" y="1" width="18" height="18" rx="1" fill="#cf382c"/><circle cx="10" cy="10" r="5.500" fill="none" stroke="#f7cec8" stroke-width="2" stroke-dasharray="2.600 1.720"/></svg>
      <svg viewBox="0 0 20 20" class="overflow-visible"><rect x="-2" y="-3" width="24" height="26" rx="2" fill="#3b4630"/><path d="M2.500 0H17.500V15L15 18H2.500Z" fill="#f4761c"/><path d="M2.500 15H17.500L15 18H2.500Z" fill="#c94e0b"/><text x="7" y="11" font-family="Liberation Sans" font-weight="bold" font-size="10" fill="#fff">F</text><path d="M7 16H13" stroke="#f8c8a0"/><path d="M5 21.500H15" stroke="#b9c99a" stroke-width="2"/></svg>
    </div>
    <svg class="ml-[63px] h-[6px] w-[8px]" viewBox="0 0 8 6"><path d="M.5 5L4 1.500L7.500 5" fill="none" stroke="#ddd" stroke-width="1.200"/></svg>
    <svg class="ml-[11px] h-[8px] w-[12px]" viewBox="0 0 12 8"><path d="M2.500 8Q0 7.500.5 5Q1.500 3.500 3 3.800Q5-.5 8.500 2.500Q12 3.500 11.800 6Q11.500 8 9.500 8Z" fill="#eee"/></svg>
    <div class="ml-[10px] w-[22px] text-center text-[8.500px] leading-[11px] tracking-[-0.300px]">ENG<br>IN</div>
    <svg class="ml-[10px] h-[10px] w-[12px]" viewBox="0 0 12 10"><path d="M.5 3.500Q6-1.500 11.500 3.500L6 9.500Z" fill="#777f70"/><path d="M.5 3.500Q6-1.500 11.500 3.500M2.500 5.500Q6 2.500 9.500 5.500M4 7.200Q6 5.500 8 7.200" fill="none" stroke="#e5e5e5"/><circle cx="6" cy="8.500" r="1" fill="#fff"/></svg>
    <svg class="ml-[5px] h-[10px] w-[12px]" viewBox="0 0 12 10"><path d="M.5 3.500H2.500L5.500 1V9L2.500 6.500H.5Z" fill="none" stroke="#e5e5e5"/><path d="M7 3.500Q8 5 7 6.500M8.500 2Q10.500 5 8.500 8M10 .8Q13 5 10 9.200" fill="none" stroke="#ccc"/></svg>
    <svg class="ml-[5px] h-[8px] w-[12px]" viewBox="0 0 12 8"><rect x=".5" y=".5" width="10" height="7" rx="1.500" fill="none" stroke="#e5e5e5"/><rect x="2" y="2" width="5" height="4" fill="#eee"/><path d="M11.500 2.500V5.500" stroke="#e5e5e5"/></svg>
    <div class="ml-[11px] text-[8.500px] leading-[11px] tracking-[-0.300px] whitespace-nowrap"><p class="pl-[8px]">08:0</p><p>10-04</p></div>
  </div>
</section>
</body>
</html>
